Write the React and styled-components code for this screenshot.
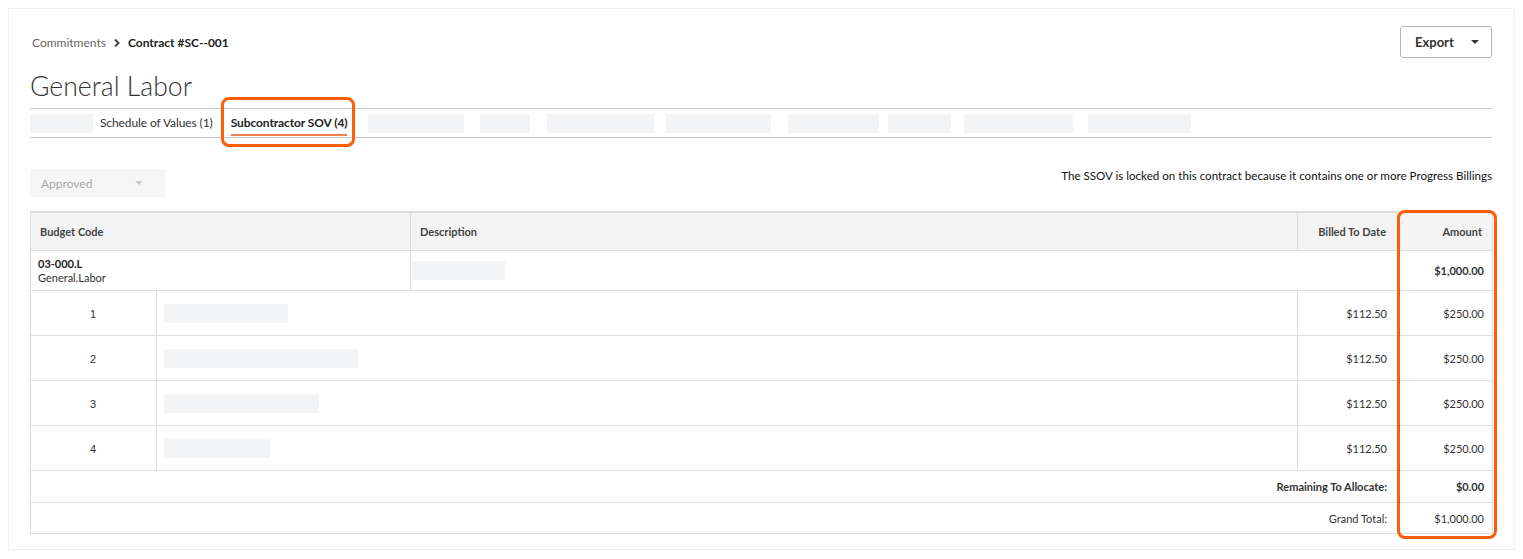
import React from 'react';
import styled, { createGlobalStyle } from 'styled-components';

const GlobalStyle = createGlobalStyle`
  body {
    margin: 8px;
    background: #fff;
    font-family: Lato, "Open Sans", sans-serif;
    color: #333;
  }
`;

const Card = styled.div`
  height: 542px;
  box-sizing: border-box;
  border: 1px solid #f0f0f0;
  padding: 17px 22px 0 21px;
`;

const TopBar = styled.div`
  display: flex;
  justify-content: space-between;
  align-items: center;
  height: 32px;
`;

const Crumbs = styled.div`
  display: flex;
  align-items: center;
  gap: 7px;
  font-size: 12px;
  padding-left: 2px;
  padding-top: 1px;
`;

const Crumb = styled.span`
  color: ${(p) => (p.$current ? '#222' : '#666')};
  font-weight: ${(p) => (p.$current ? 700 : 400)};
`;

const ExportButton = styled.button`
  width: 92px;
  height: 32px;
  box-sizing: border-box;
  border: 1px solid #b5b5b5;
  border-radius: 3px;
  background: #fff;
  font-family: Lato, sans-serif;
  font-size: 13px;
  font-weight: 700;
  color: #333;
  display: flex;
  align-items: center;
  padding: 0 0 0 14px;
  gap: 17px;
`;

const Caret = styled.span`
  width: 0;
  height: 0;
  border-left: ${(p) => p.$size}px solid transparent;
  border-right: ${(p) => p.$size}px solid transparent;
  border-top: ${(p) => p.$size}px solid ${(p) => p.$color};
`;

const Title = styled.h1`
  margin: 12px 0 6px;
  font-size: 26.6px;
  line-height: 32px;
  font-weight: 300;
  color: #333;
`;

const TabBar = styled.div`
  display: flex;
  align-items: center;
  height: 28px;
  border-top: 1px solid #c6c6c6;
  border-bottom: 1px solid #c6c6c6;
`;

const Skeleton = styled.div`
  width: ${(p) => p.$w}px;
  height: ${(p) => p.$h || 19}px;
  margin-left: ${(p) => p.$ml || 0}px;
  background: #f3f4f5;
  flex: none;
`;

const Tab = styled.div`
  position: relative;
  margin-left: ${(p) => p.$ml}px;
  font-size: 12px;
  letter-spacing: -0.1px;
  line-height: 28px;
  color: ${(p) => (p.$active ? '#222' : '#333')};
  font-weight: ${(p) => (p.$active ? 700 : 400)};
  white-space: nowrap;
  ${(p) =>
    p.$active &&
    `
    &::before {
      content: '';
      position: absolute;
      left: 0;
      right: 0;
      bottom: 1px;
      height: 2px;
      background: #f08050;
    }
    &::after {
      content: '';
      position: absolute;
      left: -10px;
      right: -8px;
      top: -12px;
      bottom: -10px;
      border: 3px solid #fe5b0a;
      border-radius: 8px;
    }
  `}
`;

const Toolbar = styled.div`
  display: flex;
  justify-content: space-between;
  align-items: flex-start;
  margin-top: 31px;
  height: 28px;
`;

const StatusSelect = styled.div`
  width: 135px;
  height: 28px;
  box-sizing: border-box;
  background: #f6f6f6;
  border-radius: 2px;
  display: flex;
  align-items: center;
  justify-content: space-between;
  padding: 0 22px 0 11px;
  font-size: 12px;
  color: #aaa;
`;

const LockNote = styled.div`
  font-size: 11.6px;
  color: #111;
  line-height: 12px;
  padding-top: 1px;
`;

const TableWrap = styled.div`
  position: relative;
  margin-top: 14px;
`;

const Highlight = styled.div`
  position: absolute;
  top: -1px;
  right: -5px;
  bottom: -5px;
  width: 100px;
  box-sizing: border-box;
  border: 3px solid #fe5b0a;
  border-radius: 8px;
  pointer-events: none;
`;

const Table = styled.table`
  width: 1462px;
  table-layout: fixed;
  border-collapse: collapse;
  border-top: 2px solid #ddd;
  font-size: 11px;
  color: #333;
`;

const Cell = styled.td`
  border: 1px solid #ddd;
  height: ${(p) => p.$h}px;
  padding: 0 ${(p) => p.$pr || 8}px 0 ${(p) => (p.$pl !== undefined ? p.$pl : 7)}px;
  text-align: ${(p) => p.$align || 'left'};
  font-weight: ${(p) => (p.$bold ? 700 : 400)};
  vertical-align: middle;
  box-sizing: border-box;
`;

const HeadCell = styled.th`
  border: 1px solid #ddd;
  height: 37px;
  background: #f4f4f4;
  font-size: 11px;
  font-weight: 700;
  color: #444;
  text-align: ${(p) => p.$align || 'left'};
  padding: 0 ${(p) => p.$pr || 10}px 0 ${(p) => p.$pl || 9}px;
`;

const CodeMain = styled.div`
  font-weight: 700;
  color: #222;
  line-height: 14px;
`;

const CodeSub = styled.div`
  line-height: 14px;
  color: #333;
`;

const LineNo = styled.span`
  font-family: "Liberation Sans", Arial, sans-serif;
  font-size: 11px;
  color: #333;
`;

const tabSkeletons = [
  { w: 96, ml: 21 },
  { w: 50, ml: 16 },
  { w: 107, ml: 17 },
  { w: 105, ml: 12 },
  { w: 91, ml: 17 },
  { w: 63, ml: 9 },
  { w: 109, ml: 13 },
  { w: 103, ml: 15 },
];

const lines = [
  { n: 1, w: 124 },
  { n: 2, w: 194 },
  { n: 3, w: 155 },
  { n: 4, w: 106 },
];

const Chevron = () => (
  <svg width="8" height="10" viewBox="0 0 8 10">
    <path d="M2 1.5 L5.5 5 L2 8.5" fill="none" stroke="#444" strokeWidth="2" />
  </svg>
);

export default function App() {
  return (
    <>
      <GlobalStyle />
      <Card>
        <TopBar>
          <Crumbs>
            <Crumb>Commitments</Crumb>
            <Chevron />
            <Crumb $current>Contract #SC--001</Crumb>
          </Crumbs>
          <ExportButton>
            Export
            <Caret $size={4} $color="#333" />
          </ExportButton>
        </TopBar>
        <Title>General Labor</Title>
        <TabBar>
          <Skeleton $w={63} />
          <Tab $ml={7}>Schedule of Values (1)</Tab>
          <Tab $ml={18} $active>Subcontractor SOV (4)</Tab>
          {tabSkeletons.map((s, i) => (
            <Skeleton key={i} $w={s.w} $ml={s.ml} />
          ))}
        </TabBar>
        <Toolbar>
          <StatusSelect>
            Approved
            <Caret $size={4} $color="#ccc" />
          </StatusSelect>
          <LockNote>The SSOV is locked on this contract because it contains one or more Progress Billings</LockNote>
        </Toolbar>
        <TableWrap>
          <Table>
            <colgroup>
              <col style={{ width: 126 }} />
              <col style={{ width: 254 }} />
              <col style={{ width: 887 }} />
              <col style={{ width: 100 }} />
              <col style={{ width: 95 }} />
            </colgroup>
            <thead>
              <tr>
                <HeadCell colSpan={2}>Budget Code</HeadCell>
                <HeadCell>Description</HeadCell>
                <HeadCell $align="right" $pr={11}>Billed To Date</HeadCell>
                <HeadCell $align="right">Amount</HeadCell>
              </tr>
            </thead>
            <tbody>
              <tr>
                <Cell colSpan={2} $h={40}>
                  <CodeMain>03-000.L</CodeMain>
                  <CodeSub>General.Labor</CodeSub>
                </Cell>
                <Cell colSpan={2} $h={40} $pl={1}>
                  <Skeleton $w={93} />
                </Cell>
                <Cell $h={40} $align="right" $bold>$1,000.00</Cell>
              </tr>
              {lines.map((l) => (
                <tr key={l.n}>
                  <Cell $h={45} $align="center">
                    <LineNo>{l.n}</LineNo>
                  </Cell>
                  <Cell colSpan={2} $h={45}>
                    <Skeleton $w={l.w} />
                  </Cell>
                  <Cell $h={45} $align="right" $pr={10}>$112.50</Cell>
                  <Cell $h={45} $align="right">$250.00</Cell>
                </tr>
              ))}
              <tr>
                <Cell colSpan={4} $h={32} $align="right" $pr={10} $bold>Remaining To Allocate:</Cell>
                <Cell $h={32} $align="right" $bold>$0.00</Cell>
              </tr>
              <tr>
                <Cell colSpan={4} $h={31} $align="right" $pr={10}>Grand Total:</Cell>
                <Cell $h={31} $align="right">$1,000.00</Cell>
              </tr>
            </tbody>
          </Table>
          <Highlight />
        </TableWrap>
      </Card>
    </>
  );
}
